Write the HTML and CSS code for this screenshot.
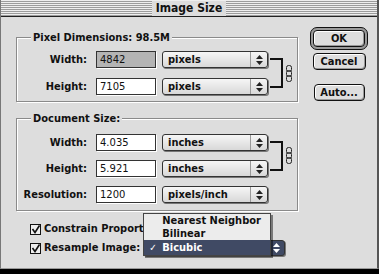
FILE: index.html
```html
<!doctype html>
<html lang="en">
  <head>
    <meta charset="utf-8">
    <title>Image Size</title>
    <link rel="stylesheet" href="styles.css">
  </head>
  <body>
    <div class="window">
      <div class="titlebar"><span class="title">Image Size</span></div>
      <div class="content">
        <div class="main">
          <fieldset class="group group-px">
            <legend>Pixel Dimensions: 98.5M</legend>
            <div class="grid">
              <label>Width:</label>
              <span class="field sel">4842</span>
              <span class="popup"><span class="popup-text">pixels</span><span class="arrows"><svg width="7" height="10" viewBox="0 0 7 10"><path d="M0 4 L3.5 0 L7 4 Z M0 6 L3.5 10 L7 6 Z" fill="#222"/></svg></span></span>
              <div class="link">
                <span class="bracket"></span>
                <svg class="chain" width="6" height="17" viewBox="0 0 6 17"><g fill="none" stroke="#222" stroke-width="1"><rect x="0.5" y="0.5" width="5" height="6" rx="2"/><rect x="0.5" y="5.5" width="5" height="6" rx="2"/><rect x="0.5" y="10.5" width="5" height="6" rx="2"/></g></svg>
              </div>
              <label>Height:</label>
              <span class="field">7105</span>
              <span class="popup"><span class="popup-text">pixels</span><span class="arrows"><svg width="7" height="10" viewBox="0 0 7 10"><path d="M0 4 L3.5 0 L7 4 Z M0 6 L3.5 10 L7 6 Z" fill="#222"/></svg></span></span>
            </div>
          </fieldset>

          <fieldset class="group group-doc">
            <legend>Document Size:</legend>
            <div class="grid">
              <label>Width:</label>
              <span class="field">4.035</span>
              <span class="popup"><span class="popup-text">inches</span><span class="arrows"><svg width="7" height="10" viewBox="0 0 7 10"><path d="M0 4 L3.5 0 L7 4 Z M0 6 L3.5 10 L7 6 Z" fill="#222"/></svg></span></span>
              <div class="link">
                <span class="bracket"></span>
                <svg class="chain" width="6" height="17" viewBox="0 0 6 17"><g fill="none" stroke="#222" stroke-width="1"><rect x="0.5" y="0.5" width="5" height="6" rx="2"/><rect x="0.5" y="5.5" width="5" height="6" rx="2"/><rect x="0.5" y="10.5" width="5" height="6" rx="2"/></g></svg>
              </div>
              <label>Height:</label>
              <span class="field">5.921</span>
              <span class="popup"><span class="popup-text">inches</span><span class="arrows"><svg width="7" height="10" viewBox="0 0 7 10"><path d="M0 4 L3.5 0 L7 4 Z M0 6 L3.5 10 L7 6 Z" fill="#222"/></svg></span></span>
              <label>Resolution:</label>
              <span class="field">1200</span>
              <span class="popup"><span class="popup-text">pixels/inch</span><span class="arrows"><svg width="7" height="10" viewBox="0 0 7 10"><path d="M0 4 L3.5 0 L7 4 Z M0 6 L3.5 10 L7 6 Z" fill="#222"/></svg></span></span>
            </div>
          </fieldset>

          <div class="checks">
            <div class="check-row">
              <span class="checkbox"><svg width="9" height="9" viewBox="0 0 9 9"><path d="M1.5 4 L4 7.5 L8.5 0.5" fill="none" stroke="#111" stroke-width="1.6"/></svg></span>
              <span class="check-label">Constrain Proportions</span>
            </div>
            <div class="check-row">
              <span class="checkbox"><svg width="9" height="9" viewBox="0 0 9 9"><path d="M1.5 4 L4 7.5 L8.5 0.5" fill="none" stroke="#111" stroke-width="1.6"/></svg></span>
              <span class="check-label">Resample Image:</span>
              <span class="popup popup-open">
                <span class="arrows"><svg width="7" height="10" viewBox="0 0 7 10"><path d="M0 4 L3.5 0 L7 4 Z M0 6 L3.5 10 L7 6 Z" fill="#fff"/></svg></span>
                <span class="menu">
                  <span class="menu-item">Nearest Neighbor</span>
                  <span class="menu-item">Bilinear</span>
                  <span class="menu-item current"><span class="tick">✓</span>Bicubic</span>
                </span>
              </span>
            </div>
          </div>
        </div>

        <div class="buttons">
          <span class="ring"><span class="btn btn-ok">OK</span></span>
          <span class="btn btn-cancel">Cancel</span>
          <span class="btn btn-auto">Auto...</span>
        </div>
      </div>
    </div>
  </body>
</html>
```

FILE: styles.css
```css
body {
  margin: 0;
  background: #000;
  font-family: "DejaVu Sans Condensed", "DejaVu Sans", sans-serif;
  color: #111;
}
.window {
  width: 379px;
  height: 269px;
  box-sizing: border-box;
  background: #dddddd;
  border-left: 1px solid #777;
  border-right: 2px solid #555;
  border-bottom: 1px solid #999;
  display: flex;
  flex-direction: column;
}
.titlebar {
  height: 16px;
  flex: none;
  border-bottom: 1px solid #222;
  background: repeating-linear-gradient(to bottom, #eeeeee 0 1px, #9c9c9c 1px 2px);
  display: flex;
  justify-content: center;
  align-items: center;
}
.title {
  background: #dddddd;
  padding: 0 4px;
  font-weight: bold;
  font-size: 12px;
  line-height: 15px;
}
.content {
  display: flex;
  padding: 10px 0 0 15px;
}
.main {
  width: 283px;
  padding-top: 4px;
}
.group {
  box-sizing: border-box;
  width: 282px;
  margin: 0;
  padding: 7px 0 6px 0;
  border: 1px solid #8a8a8a;
  box-shadow: 1px 1px 0 #fff, inset 1px 1px 0 #fff;
}
.group legend {
  margin-left: 14px;
  padding: 0 2px;
  font-weight: bold;
  font-size: 11px;
  line-height: 13px;
  background: #dddddd;
}
.group-doc {
  margin-top: 10px;
  padding-top: 9px;
  padding-bottom: 7px;
}
.grid {
  display: grid;
  grid-template-columns: 79px 66px 106px auto;
  grid-auto-rows: 17px;
  row-gap: 10px;
}
.group-doc .grid {
  row-gap: 9px;
}
.grid label {
  text-align: right;
  padding-right: 9px;
  font-weight: bold;
  font-size: 11px;
  line-height: 17px;
}
.field {
  box-sizing: border-box;
  width: 60px;
  height: 17px;
  border: 1px solid #333;
  box-shadow: 1px 1px 0 #fff;
  background: #fff;
  padding-left: 3px;
  font-family: "DejaVu Sans", sans-serif;
  font-size: 10px;
  line-height: 15px;
}
.field.sel {
  background: #b4b4b4;
}
.popup {
  box-sizing: border-box;
  width: 106px;
  height: 17px;
  border: 1px solid #333;
  border-radius: 3px;
  background: linear-gradient(#f6f6f6, #d8d8d8);
  box-shadow: 1px 1px 0 #777;
  display: flex;
  position: relative;
}
.popup-text {
  flex: 1;
  padding-left: 5px;
  font-weight: bold;
  font-size: 11px;
  line-height: 15px;
}
.arrows {
  width: 16px;
  border-left: 1px solid #999;
  display: flex;
  align-items: center;
  justify-content: center;
}
.link {
  grid-row: 1 / span 2;
  grid-column: 4;
  display: flex;
  align-items: center;
}
.bracket {
  box-sizing: border-box;
  width: 13px;
  height: 30px;
  margin-left: 2px;
  border: 2px solid #111;
  border-left: none;
}
.chain {
  margin-left: 3px;
}
.checks {
  padding: 10px 0 0 14px;
  display: flex;
  flex-direction: column;
  gap: 3px;
}
.check-row {
  display: flex;
  align-items: center;
  height: 16px;
}
.checkbox {
  box-sizing: border-box;
  width: 11px;
  height: 11px;
  border: 1px solid #111;
  background: #eee;
  display: flex;
  align-items: center;
  justify-content: center;
  margin-right: 3px;
}
.check-label {
  font-weight: bold;
  font-size: 11px;
  line-height: 16px;
}
.popup-open {
  width: 142px;
  height: 16px;
  margin-left: 3px;
  background: #404a64;
  justify-content: flex-end;
}
.popup-open .arrows {
  border-left: none;
}
.menu {
  position: absolute;
  left: -1px;
  top: -28px;
  width: 126px;
  background: #ececec;
  border: 1px solid #444;
  box-shadow: 2px 2px 0 rgba(0, 0, 0, 0.45);
  display: flex;
  flex-direction: column;
}
.menu-item {
  height: 13px;
  padding-left: 18px;
  font-weight: bold;
  font-size: 11px;
  line-height: 13px;
  position: relative;
}
.menu-item.current {
  height: 15px;
  line-height: 15px;
  background: #404a64;
  color: #fff;
}
.tick {
  position: absolute;
  left: 5px;
  font-size: 10px;
}
.buttons {
  margin-left: 11px;
  width: 58px;
  display: flex;
  flex-direction: column;
  align-items: center;
}
.btn {
  box-sizing: border-box;
  height: 17px;
  border: 1px solid #111;
  border-radius: 4px;
  background: #dedede;
  box-shadow: inset 1px 1px 0 #fff, inset -1px -1px 0 #999;
  font-weight: bold;
  font-size: 11px;
  line-height: 15px;
  text-align: center;
}
.ring {
  box-sizing: border-box;
  width: 58px;
  height: 23px;
  padding: 2px;
  border: 1px solid #111;
  border-radius: 7px;
  background: #9a9a9a;
}
.btn-ok {
  display: block;
}
.btn-cancel {
  width: 53px;
  margin-top: 3px;
}
.btn-auto {
  width: 51px;
  margin-top: 14px;
}
```
